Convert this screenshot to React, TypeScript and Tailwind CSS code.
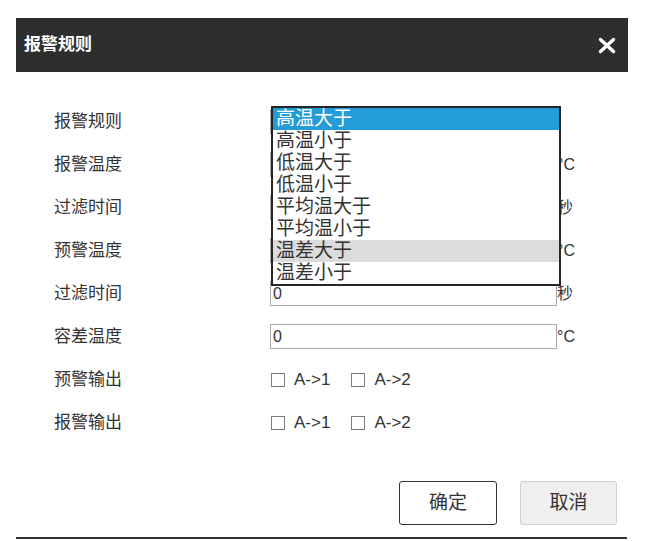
import { useState } from 'react';

type Row =
  | { label: string; kind: 'select' }
  | { label: string; kind: 'input'; unit: string }
  | { label: string; kind: 'check' };

const rows: Row[] = [
  { label: '报警规则', kind: 'select' },
  { label: '报警温度', kind: 'input', unit: '°C' },
  { label: '过滤时间', kind: 'input', unit: '秒' },
  { label: '预警温度', kind: 'input', unit: '°C' },
  { label: '过滤时间', kind: 'input', unit: '秒' },
  { label: '容差温度', kind: 'input', unit: '°C' },
  { label: '预警输出', kind: 'check' },
  { label: '报警输出', kind: 'check' },
];

const options = ['高温大于', '高温小于', '低温大于', '低温小于', '平均温大于', '平均温小于', '温差大于', '温差小于'];

function CloseIcon() {
  return (
    <svg width="18" height="17" viewBox="0 0 18 17" fill="none">
      <path d="M2.5 2.5 L15.5 14.5 M15.5 2.5 L2.5 14.5" stroke="#fff" strokeWidth="3.4" strokeLinecap="round" />
    </svg>
  );
}

function Check({ text }: { text: string }) {
  return (
    <label className="flex items-center">
      <span className="w-[14px] h-[14px] border border-[#7a7a7a] bg-white" />
      <span className="ml-[9px] text-[17px] leading-[20px] text-[#333]">{text}</span>
    </label>
  );
}

export default function App() {
  const [selected] = useState(0);
  const hovered = 6;

  return (
    <div
      className="w-[664px] h-[541px] bg-white overflow-hidden"
      style={{ fontFamily: '"Liberation Sans", "Noto Sans CJK SC", sans-serif' }}
    >
      <div className="relative ml-[16px] pt-[18px] w-[612px]">
        {/* Header */}
        <div className="h-[54px] bg-[#2e2e2e] flex items-center justify-between pl-[8px] pr-[12px]">
          <span className="text-white font-bold text-[17px] leading-[20px]">报警规则</span>
          <CloseIcon />
        </div>

        {/* Form rows */}
        <div className="pt-[28px]">
          {rows.map((row, i) => (
            <div key={i} className="h-[43px] flex items-center">
              <div className="w-[254px] pl-[38px] text-[17px] leading-[20px] text-[#333]">{row.label}</div>
              {row.kind === 'select' && <div className="w-[287px] h-[25px] border border-[#a9a9a9]" />}
              {row.kind === 'input' && (
                <>
                  <div className="w-[287px] h-[25px] border border-[#a9a9a9] flex items-center pl-[2px] text-[16px] text-[#333]">
                    0
                  </div>
                  <span className="text-[16px] leading-[20px] text-[#333]">{row.unit}</span>
                </>
              )}
              {row.kind === 'check' && (
                <div className="flex items-center gap-[21px] pl-[1px]">
                  <Check text="A->1" />
                  <Check text="A->2" />
                </div>
              )}
            </div>
          ))}
        </div>

        {/* Buttons */}
        <div className="flex justify-end gap-[23px] pr-[11px] mt-[37px]">
          <button className="w-[98px] h-[44px] border border-[#333] rounded-[3px] bg-white text-[19px] text-[#333]">
            确定
          </button>
          <button className="w-[97px] h-[44px] border border-[#d0d0d0] rounded-[3px] bg-[#efefef] text-[19px] text-[#333]">
            取消
          </button>
        </div>
        <div className="mt-[12px] h-[2px] w-[611px] bg-[#333]" />

        {/* Open dropdown list */}
        <div className="absolute left-[255px] top-[106px] w-[290px] border-2 border-[#262626] bg-white">
          {options.map((opt, i) => (
            <div
              key={opt}
              className={`h-[22px] pl-[3px] text-[19px] leading-[22px] ${
                i === selected ? 'bg-[#239cd8] text-white' : i === hovered ? 'bg-[#dcdcdc] text-[#333]' : 'text-[#333]'
              }`}
            >
              {opt}
            </div>
          ))}
        </div>
      </div>
    </div>
  );
}
